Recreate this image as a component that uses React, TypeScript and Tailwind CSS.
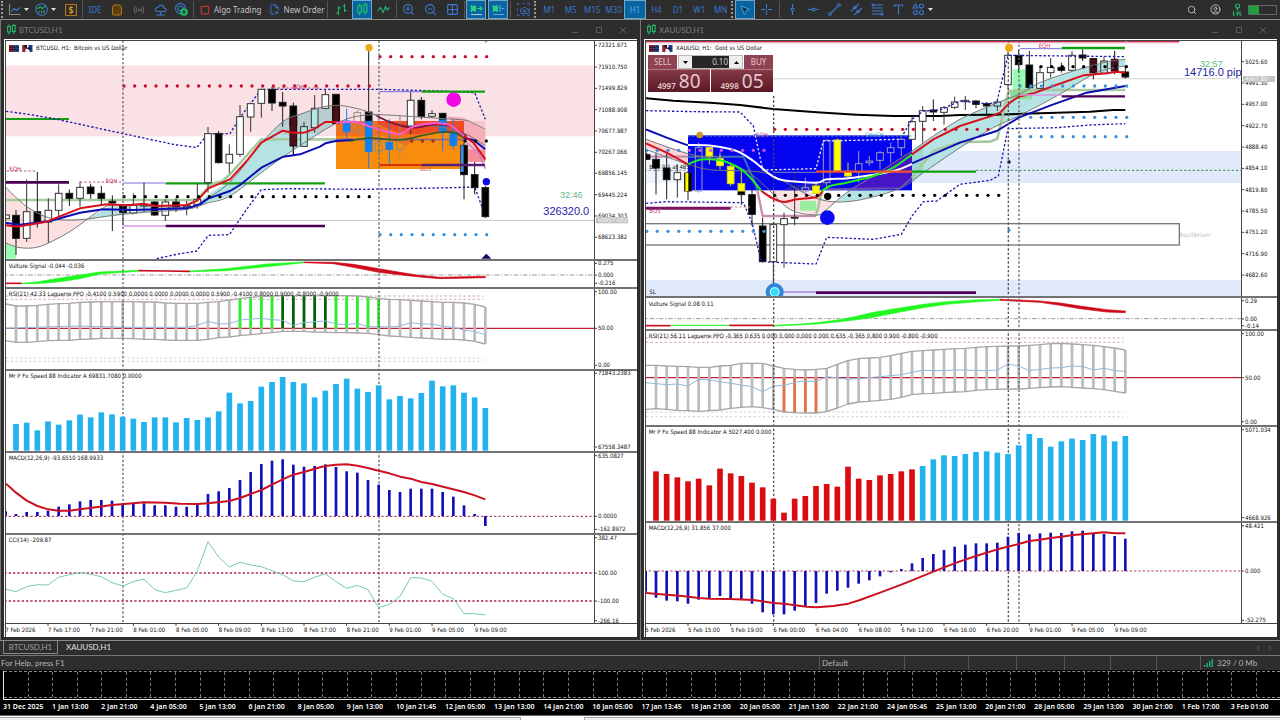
import React from "react";
import {
  Camera,
  ChevronDown,
  CircleUser,
  FilePlus2,
  Grid2x2,
  MousePointer2,
  Radio,
  Search,
  ShoppingBag,
  Square,
  ZoomIn,
  ZoomOut,
} from "lucide-react";

/*
 * Chart geometry is kept in plot units: three units to a pixel, one bar
 * every 32 units. Every panel shifts the units by its own `oy`.
 */
type Pt = [number, number];
const U = 3;
const LEFT = 6;
const BAR0 = 48;
const STEP = 32;

const pts = (list: Pt[]) => list.map((p) => p.join(",")).join(" ");

function smooth(list: Pt[]): string {
  let d = `M${list[0][0]},${list[0][1]}`;
  for (let i = 0; i < list.length - 1; i++) {
    const a = list[Math.max(0, i - 1)];
    const b = list[i];
    const c = list[i + 1];
    const e = list[Math.min(list.length - 1, i + 2)];
    d += `C${b[0] + (c[0] - a[0]) / 6},${b[1] + (c[1] - a[1]) / 6} ${c[0] - (e[0] - b[0]) / 6},${c[1] - (e[1] - b[1]) / 6} ${c[0]},${c[1]}`;
  }
  return d;
}

function Line({ p, c, w = 4, dash }: { p: Pt[]; c: string; w?: number; dash?: string }) {
  return <polyline points={pts(p)} fill="none" stroke={c} strokeWidth={w} strokeDasharray={dash} strokeLinejoin="round" />;
}
function Curve({ p, c, w = 3 }: { p: Pt[]; c: string; w?: number }) {
  return <path d={smooth(p)} fill="none" stroke={c} strokeWidth={w} />;
}
function H({ y, x1 = 0, x2 = 6000, c, w = 3, dash }: { y: number; x1?: number; x2?: number; c: string; w?: number; dash?: string }) {
  return <line x1={x1} x2={x2} y1={y} y2={y} stroke={c} strokeWidth={w} strokeDasharray={dash} />;
}
function V({ x, c = "#6a6a6a", w = 4, dash = "7 6" }: { x: number; c?: string; w?: number; dash?: string }) {
  return <line x1={x} x2={x} y1={0} y2={1200} stroke={c} strokeWidth={w} strokeDasharray={dash} />;
}
function Dots({ from, to, y, c, r = 5 }: { from: number; to: number; y: number; c: string; r?: number }) {
  const xs: number[] = [];
  for (let x = from; x <= to; x += STEP) xs.push(x);
  return (
    <g fill={c}>
      {xs.map((x) => (
        <circle key={x} cx={x} cy={y} r={r} />
      ))}
    </g>
  );
}

type Candle = [x: number, kind: string, high: number, top: number, bottom: number, low: number];
const KIND: Record<string, { fill: string; stroke: string }> = {
  w: { fill: "#ffffff", stroke: "#333333" },
  b: { fill: "#000000", stroke: "#1a1a1a" },
  m: { fill: "#4a0f18", stroke: "#1a0508" },
  l: { fill: "#1080f0", stroke: "#1080f0" },
  o: { fill: "none", stroke: "#8f8f70" },
  y: { fill: "#ffff00", stroke: "#d8d820" },
  p: { fill: "none", stroke: "#9a9ac8" },
  t: { fill: "#b5e6e6", stroke: "#333333" },
};
function Candles({ list }: { list: Candle[] }) {
  return (
    <g>
      {list.map(([x, k, h, t, b, l], i) => (
        <g key={i} stroke={KIND[k].stroke} strokeWidth={3}>
          <line x1={x} x2={x} y1={h} y2={t} />
          <line x1={x} x2={x} y1={b} y2={l} />
          <rect x={x - 10} y={t} width={20} height={Math.max(2, b - t)} fill={KIND[k].fill} />
        </g>
      ))}
    </g>
  );
}

type TextItem = { x: number; y: number; t: string; c?: string; cls?: string };
const SMALL = "font-['DejaVu_Sans_Condensed','DejaVu_Sans',sans-serif] text-[6px]";
function Texts({ items, oy }: { items: TextItem[]; oy: number }) {
  return (
    <>
      {items.map((i) => (
        <text key={i.t + i.x} x={i.x / U - LEFT} y={i.y / U + oy} fill={i.c ?? "#111"} className={i.cls ?? SMALL}>
          {i.t}
        </text>
      ))}
    </>
  );
}

type Tick = [y: number, label: string];
function Panel({
  height,
  oy,
  axis,
  axisW,
  ticks,
  texts = [],
  overlay,
  last,
  badge,
  children,
}: {
  height: string;
  oy: number;
  axis?: string;
  axisW: string;
  ticks: Tick[];
  texts?: TextItem[];
  overlay?: React.ReactNode;
  last?: boolean;
  badge?: Tick;
  children: React.ReactNode;
}) {
  return (
    <div className={`relative flex shrink-0 ${last ? "border-b border-[#444]" : "border-b-2 border-[#727272]"} ${height}`}>
      <svg className="h-full min-w-0 flex-1 overflow-hidden" aria-label={axis}>
        <g transform={`translate(${-LEFT} ${oy}) scale(${1 / U})`}>{children}</g>
        <Texts items={texts} oy={oy} />
      </svg>
      <svg className={`h-full shrink-0 overflow-visible border-l border-[#444] ${axisW}`}>
        {ticks.map(([y, t]) => (
          <g key={t}>
            <line x1={0} x2={2} y1={y / U + oy} y2={y / U + oy} stroke="#444" />
            <text x={3} y={y / U + oy + 2} fill="#111" className={SMALL}>
              {t}
            </text>
          </g>
        ))}
        {badge && (
          <g>
            <rect x={1} y={badge[0] / U + oy - 3} width={32} height={6} fill="#c4c4c4" />
            <text x={3} y={badge[0] / U + oy + 2} fill="#f4f4f4" className={SMALL}>
              {badge[1]}
            </text>
          </g>
        )}
      </svg>
      {overlay}
    </div>
  );
}

function ChartTitle({ text }: { text: string }) {
  return (
    <div className="absolute left-[3px] top-[3px] flex items-center gap-[3px] font-['DejaVu_Sans_Condensed','DejaVu_Sans',sans-serif] text-[6px] leading-[8px] text-[#111]">
      <svg className="h-[7px] w-[10px]" viewBox="0 0 10 7">
        <rect width="5" height="7" fill="#8c1c2c" />
        <rect x="5" width="5" height="7" fill="#1c4c8c" />
        <path d="M0 2.3H10M0 4.6H10" stroke="#201a30" strokeWidth="1" />
      </svg>
      <svg className="h-[7px] w-[11px]" viewBox="0 0 10 7">
        <path d="M0 0H10V7H7V4H3V7H0Z" fill="#1c3c8c" />
        <path d="M0 0H4V4H3V7H0Z" fill="#a01c24" />
        <path d="M2 0H4.500V2.500H2zM5.500 2.500H8V5H5.500z" fill="#14141c" />
        <path d="M4.500 0H6V2.500H4.500zM3 4.500H6.500V7H3z" fill="#fff" />
      </svg>
      <span className="whitespace-pre">{text}</span>
    </div>
  );
}

function Bars({ tops, base, w, color }: { tops: number[]; base: number; w: number; color: (i: number) => string }) {
  return (
    <g>
      {tops.map((t, i) => (
        <rect key={i} x={BAR0 + i * STEP - w / 2} y={Math.min(t, base)} width={w} height={Math.abs(base - t)} fill={color(i)} />
      ))}
    </g>
  );
}

function RsiBands({ up, low, color, mid }: { up: number[]; low: number[]; color: (i: number) => string | null; mid: number }) {
  const xs = up.map((_, i) => (i === 0 ? 18 : BAR0 + (i - 1) * STEP));
  return (
    <g>
      <H y={mid} c="#c0203a" w={4} />
      {xs.slice(1).map((x, i) => {
        const c = color(i);
        const orange = c === "#e0714a";
        return (
          <g key={x}>
            <rect x={x - 4} width={8} y={up[i + 1]} height={low[i + 1] - up[i + 1]} fill="#bcbaba" />
            {c && <rect x={x - 4} width={8} y={orange ? mid : up[i + 1]} height={orange ? low[i + 1] - mid : mid - up[i + 1]} fill={c} />}
          </g>
        );
      })}
      <Line p={xs.map((x, i): Pt => [x, up[i]])} c="#a6a6a6" w={4} />
      <Line p={xs.map((x, i): Pt => [x, low[i]])} c="#a6a6a6" w={4} />
    </g>
  );
}

function TimeRow({ labels }: { labels: string[] }) {
  return (
    <svg className="h-[13px] w-full overflow-visible">
      {labels.map((t, i) => {
        const x = (16 + i * 128) / U - LEFT;
        return (
          <g key={t}>
            <line x1={x} x2={x} y1={0} y2={2} stroke="#444" />
            <text x={x} y={8} fill="#111" className={SMALL}>
              {t}
            </text>
          </g>
        );
      })}
    </svg>
  );
}

/* ------------------------------ BTCUSD data ------------------------------ */

const btcCandles: Candle[] = [
  [18, "w", 535, 537, 548, 550], [48, "b", 522, 538, 607, 657], [80, "w", 430, 527, 607, 618],
  [112, "b", 408, 527, 558, 575], [145, "w", 487, 523, 558, 620], [176, "w", 445, 472, 523, 540],
  [208, "b", 460, 472, 487, 510], [240, "w", 437, 454, 487, 512], [272, "b", 443, 453, 473, 488],
  [304, "b", 450, 472, 487, 505], [337, "b", 478, 496, 501, 585], [369, "b", 505, 510, 530, 568],
  [400, "w", 472, 508, 531, 535], [432, "b", 440, 505, 510, 528], [464, "b", 495, 498, 537, 540],
  [496, "w", 490, 498, 538, 555], [528, "b", 487, 498, 512, 528], [560, "w", 495, 508, 512, 538],
  [592, "w", 443, 490, 505, 518], [624, "w", 273, 293, 440, 470], [656, "b", 285, 293, 380, 382],
  [688, "w", 325, 355, 381, 412], [720, "w", 207, 242, 355, 363], [752, "w", 200, 203, 243, 287],
  [784, "w", 158, 160, 202, 245], [816, "b", 153, 160, 201, 225], [848, "b", 168, 199, 210, 272],
  [880, "b", 200, 210, 270, 357], [880, "m", 240, 240, 330, 357], [912, "t", 258, 272, 331, 333],
  [944, "t", 177, 217, 275, 290], [976, "w", 160, 176, 217, 220], [1008, "b", 175, 175, 262, 262],
  [1008, "m", 210, 210, 262, 262], [1040, "l", 218, 255, 287, 310], [1072, "o", 222, 230, 287, 290],
  [1106, "b", 40, 228, 256, 256], [1106, "l", 256, 256, 347, 398], [1136, "o", 310, 320, 347, 350],
  [1168, "l", 250, 319, 340, 385], [1200, "o", 238, 312, 340, 360], [1232, "w", 167, 193, 270, 295],
  [1264, "b", 183, 193, 241, 250], [1296, "w", 222, 233, 241, 246], [1328, "b", 232, 232, 252, 252],
  [1328, "l", 252, 252, 290, 345], [1360, "l", 250, 290, 328, 340], [1392, "b", 320, 328, 416, 490],
  [1424, "b", 378, 416, 455, 475], [1456, "b", 450, 455, 542, 546],
];

const btcSpeed = [
  504, 500, 523, 496, 506, 493, 476, 484, 469, 475, 482, 488, 498, 484, 484, 499, 486, 492, 484, 466, 410, 442, 435, 392,
  378, 363, 378, 382, 424, 404, 384, 368, 398, 408, 388, 430, 420, 427, 411, 374, 391, 388, 410, 424, 456,
];
const btcMacd = [
  774, 768, 768, 764, 752, 745, 736, 732, 732, 734, 742, 743, 742, 748, 748, 752, 752, 745, 714, 706, 696, 672, 648, 624,
  614, 610, 626, 632, 630, 625, 633, 646, 650, 672, 686, 702, 708, 698, 698, 698, 708, 722, 748, 774, 810,
];
const btcRsiUp = [
  144, 150, 150, 148, 145, 143, 142, 139, 138, 137, 137, 137, 137, 138, 138, 141, 142, 142, 142, 139, 137, 132, 128, 124,
  122, 120, 119, 119, 119, 119, 119, 119, 119, 120, 123, 127, 130, 131, 133, 135, 137, 139, 139, 141, 145, 153,
];
const btcRsiLow = [
  254, 259, 259, 257, 254, 253, 253, 250, 249, 247, 247, 247, 248, 250, 250, 252, 253, 253, 253, 250, 245, 243, 239, 236,
  233, 230, 226, 226, 226, 228, 229, 230, 230, 231, 232, 236, 240, 242, 244, 246, 248, 250, 250, 252, 256, 264,
];

function BtcPrice() {
  return (
    <>
      <rect x={0} y={88} width={6000} height={213} fill="#fae1e5" />
      <rect x={18} y={578} width={30} height={90} fill="#98fbb4" />
      <path d="M18,455 C60,500 100,545 190,551 L262,549 C220,580 160,618 110,634 C70,640 40,632 18,622Z" fill="#fde0e0" />
      <path d="M262,549 L340,505 L440,505 L570,512 L600,495 L640,465 L700,430 L784,320 L848,255 L900,235 L960,215 L1008,210 L1008,262 L960,290 L850,362 L784,410 L690,480 L620,502 L560,520 L440,530 L340,540Z" fill="#b5e3e3" />
      <path d="M820,285 L848,255 L900,235 L960,215 L1008,208 L1008,262 L960,290 L870,300Z" fill="#b9ccd0" />
      <rect x={1392} y={255} width={64} height={123} fill="#fac6cb" />
      <rect x={1404} y={340} width={52} height={38} fill="#f78c9a" />
      <path d="M1340,240 L1392,245 L1456,285 L1456,330 L1392,300Z" fill="#f6aeb6" />
      <H y={553} c="#c8c8c8" />
      <H y={249} x1={18} x2={207} c="#12a012" w={6} />
      <Line p={[[18, 226], [80, 234], [150, 246], [180, 252], [370, 293], [440, 308], [520, 325], [590, 335], [624, 293], [690, 293], [720, 245], [784, 160], [1140, 160], [1320, 165], [1424, 170], [1456, 250]]} c="#1a1aac" w={4} dash="7 6" />
      <Line p={[[470, 668], [530, 655], [590, 645], [625, 598], [688, 596], [740, 520], [784, 461], [860, 458], [1100, 460], [1360, 455], [1424, 453], [1456, 540]]} c="#1a1aac" w={4} dash="7 6" />
      <H y={439} x1={18} x2={207} c="#4b0055" w={8} />
      <H y={570} x1={370} x2={497} c="#d49ae0" w={5} />
      <H y={570} x1={497} x2={975} c="#4b0055" w={7} />
      <H y={441} x1={370} x2={497} c="#7a6ad8" />
      <H y={442} x1={497} x2={975} c="#12a012" w={7} />
      <H y={405} x1={20} x2={110} c="#c05070" dash="7 6" />
      <H y={438} x1={240} x2={370} c="#c05070" dash="7 6" />
      <H y={156} x1={820} x2={960} c="#c05070" dash="7 6" />
      <rect x={1008} y={255} width={384} height={144} fill="#f88c0c" />
      <path d="M1008,300 L1008,255 H1392 V310 L1340,290 L1250,300 L1220,330 L1150,300 L1100,300Z" fill="#f2701c" />
      <path d="M1130,255 H1392 V305 L1330,285 L1250,295 L1200,292 L1150,272Z" fill="#ee4a24" />
      <Line p={[[18, 492], [590, 492], [620, 460], [640, 442], [665, 437], [690, 415], [784, 310], [1008, 310]]} c="#a8c9a0" w={8} />
      <Line p={[[1008, 310], [1392, 311]]} c="#8a6a80" w={5} />
      <Candles list={btcCandles} />
      <path d="M1382,328 h9 v80 h-9z" fill="#3b8fe0" />
      <Curve p={[[18, 455], [80, 512], [145, 545], [200, 552], [262, 549], [340, 538], [440, 528], [560, 520], [620, 502], [690, 480], [784, 410], [850, 362], [960, 290], [1010, 262], [1060, 243], [1120, 236], [1180, 238], [1300, 246], [1392, 252], [1420, 262], [1456, 280]]} c="#777" />
      <Curve p={[[18, 622], [60, 635], [110, 634], [160, 614], [220, 580], [290, 529], [330, 508], [400, 508], [560, 515], [600, 500], [690, 438], [784, 322], [850, 256], [900, 235], [960, 215], [1008, 208], [1060, 215], [1110, 230], [1170, 258], [1220, 273], [1300, 270], [1370, 285], [1410, 300], [1456, 330]]} c="#777" />
      <Line p={[[18, 561], [60, 566], [150, 555], [240, 530], [310, 520], [400, 522], [560, 517], [600, 505], [624, 488], [690, 465], [720, 447], [784, 395], [850, 362], [900, 355], [960, 332], [976, 322], [1008, 315], [1060, 312]]} c="#0c0cb4" w={6} />
      <Curve p={[[1050, 315], [1110, 306], [1200, 312], [1260, 300], [1328, 288], [1370, 292], [1400, 312]]} c="#2f5a20" w={5} />
      <Curve p={[[1130, 240], [1180, 262], [1240, 275], [1300, 266], [1350, 270], [1400, 300]]} c="#7c1040" w={5} />
      <Line p={[[1392, 306], [1420, 312], [1456, 340]]} c="#0c0cb4" w={6} />
      <Line p={[[18, 568], [50, 572], [140, 557], [240, 517], [320, 505], [380, 508], [430, 503], [470, 510], [560, 507], [592, 494], [625, 457], [690, 430], [740, 375], [784, 320], [848, 284], [880, 290], [912, 290], [940, 280], [976, 258], [1010, 258]]} c="#d8101c" w={6} />
      <Curve p={[[1008, 260], [1070, 258], [1110, 272], [1168, 288], [1200, 295], [1240, 272], [1300, 262], [1350, 268], [1395, 302]]} c="#ff58d0" w={6} />
      <Line p={[[1392, 300], [1420, 320], [1456, 370]]} c="#d8101c" w={6} />
      <Line p={[[1392, 312], [1436, 352], [1456, 398]]} c="#c58ac0" w={5} />
      <H y={167} x1={1138} x2={1265} c="#7a6ad8" />
      <H y={167} x1={1265} x2={1455} c="#12a012" w={7} />
      <H y={387} x1={1138} x2={1265} c="#d01010" w={4} />
      <H y={387} x1={1265} x2={1455} c="#5a2070" w={7} />
      <Dots from={372} to={1108} y={150} c="#cc1028" />
      <Dots from={1140} to={1460} y={62} c="#cc1028" />
      <Dots from={372} to={1108} y={482} c="#000" />
      <Dots from={1140} to={1460} y={596} c="#3a90dc" />
      <Dots from={1235} to={1330} y={315} c="#9c3010" />
      <Dots from={1395} to={1460} y={315} c="#111" />
      <V x={369} />
      <V x={1137} />
      <circle cx={1107} cy={35} r={11} fill="#f4a818" />
      <circle cx={1361} cy={191} r={22} fill="#ee08e4" />
      <circle cx={1459} cy={437} r={11} fill="#0a0ae0" />
      <path d="M1444,668 L1459,653 L1474,668Z" fill="#0a0a60" />
      <path d="M1450,12 H1466 L1458,21Z" fill="#999" />
    </>
  );
}

/* ------------------------------ XAUUSD data ------------------------------ */

const xauCandles: Candle[] = [
  [20, "b", 350, 356, 370, 372], [48, "b", 350, 370, 396, 475], [80, "b", 350, 396, 431, 490], [112, "w", 385, 410, 431, 485],
  [144, "b", 405, 411, 465, 493], [176, "p", 320, 335, 465, 470], [208, "y", 333, 335, 360, 385], [240, "y", 350, 368, 389, 400],
  [272, "y", 380, 391, 443, 450], [304, "b", 465, 465, 476, 507], [304, "y", 400, 443, 465, 465], [336, "b", 460, 476, 535, 570],
  [368, "b", 545, 570, 677, 680], [400, "w", 563, 566, 677, 770], [432, "w", 530, 548, 566, 695], [464, "w", 410, 544, 547, 568],
  [496, "p", 425, 455, 465, 490], [528, "y", 436, 450, 472, 475], [560, "p", 310, 313, 440, 465], [592, "y", 308, 312, 404, 406],
  [624, "y", 380, 406, 420, 430], [656, "p", 345, 383, 408, 440], [688, "p", 360, 375, 380, 390], [720, "p", 345, 350, 373, 400],
  [752, "p", 320, 335, 350, 380], [784, "p", 300, 310, 335, 360], [816, "w", 240, 257, 310, 312], [848, "w", 210, 224, 256, 320],
  [880, "b", 190, 222, 228, 255], [912, "w", 210, 215, 229, 266], [944, "w", 182, 198, 214, 220], [976, "w", 180, 193, 197, 222],
  [1008, "b", 193, 195, 205, 217], [1040, "b", 198, 203, 210, 235], [1072, "t", 190, 198, 210, 225], [1104, "w", 38, 58, 146, 160],
  [1136, "b", 40, 58, 86, 110], [1168, "b", 45, 87, 155, 160], [1200, "w", 90, 110, 157, 160], [1232, "w", 66, 94, 110, 125],
  [1264, "b", 80, 94, 103, 110], [1296, "w", 45, 58, 103, 105], [1328, "b", 40, 57, 66, 75], [1360, "m", 66, 68, 110, 130],
  [1392, "t", 62, 75, 112, 115], [1424, "m", 45, 70, 105, 115], [1456, "b", 90, 108, 123, 128],
];
const xauSpeed = [
  544, 552, 562, 574, 566, 586, 536, 550, 558, 578, 592, 626, 668, 626, 618, 588, 582, 590, 530, 566, 570, 556, 552, 544,
  538, 528, 508, 496, 498, 492, 486, 484, 488, 492, 466, 432, 444, 470, 454, 446, 450, 432, 436, 454, 438,
];
const xauMacd = [
  923, 932, 934, 941, 929, 924, 918, 924, 927, 941, 967, 973, 973, 962, 949, 939, 911, 902, 893, 881, 871, 859, 847, 837,
  820, 804, 792, 780, 770, 764, 760, 760, 758, 740, 729, 733, 730, 728, 729, 724, 722, 730, 732, 738, 746,
];
const xauRsiUp = [
  226, 226, 228, 229, 230, 232, 232, 228, 226, 220, 220, 220, 228, 235, 238, 240, 238, 235, 223, 212, 206, 204, 202, 197,
  190, 184, 182, 180, 178, 176, 175, 172, 170, 169, 168, 168, 166, 164, 161, 160, 162, 164, 166, 170, 174, 180,
];
const xauRsiLow = [
  358, 356, 358, 361, 362, 364, 362, 360, 355, 352, 350, 353, 358, 366, 368, 369, 369, 365, 354, 342, 336, 334, 331, 328,
  322, 314, 311, 310, 308, 306, 305, 301, 299, 298, 297, 297, 295, 293, 291, 290, 292, 294, 296, 299, 304, 309,
];

const xauA: Pt[] = [[18, 310], [140, 352], [240, 372], [320, 405], [380, 455], [450, 520], [530, 537], [560, 520], [620, 470], [700, 420], [784, 365], [816, 345], [880, 300], [960, 250], [1060, 205], [1136, 175], [1200, 140], [1300, 105], [1400, 78], [1456, 70]];
const xauB: Pt[] = [[18, 340], [100, 370], [160, 390], [220, 402], [360, 408], [430, 435], [500, 475], [560, 495], [620, 497], [690, 485], [784, 455], [850, 410], [960, 335], [1060, 275], [1136, 240], [1250, 180], [1350, 120], [1400, 100], [1456, 90]];

function XauPrice() {
  return (
    <>
      <rect x={0} y={345} width={6000} height={96} fill="#e0eafa" />
      <rect x={0} y={345} width={144} height={96} fill="#eef3fc" />
      <rect x={0} y={732} width={6000} height={48} fill="#e0eafa" />
      <H y={17} x1={0} x2={1618} c="#c02c50" w={5} />
      <H y={21} x1={0} x2={1618} c="#f3c3cf" w={3} />
      <H y={128} x1={400} c="#dcdcdc" w={4} />
      <H y={403} x1={0} x2={144} c="#555" dash="7 6" w={2} />
      <H y={403} x1={1008} c="#3a8a50" dash="7 6" w={3} />
      <path d="M18,310 L144,352 L144,385 L18,335Z" fill="#fbd3d8" />
      <path d="M385,463 L450,520 L530,537 L560,520 L585,497 L560,495 L500,463Z" fill="#fde0e0" />
      <path d={`M${pts([[590, 497], [620, 470], ...xauA.slice(9), ...xauB.slice(8).reverse()])}Z`} fill="#b5e3e3" />
      <rect x={480} y={495} width={48} height={29} fill="#98ee9c" />
      <rect x={1118} y={100} width={42} height={72} fill="#98fbb4" />
      <rect x={1110} y={164} width={66} height={26} fill="#8cdf9c" />
      <rect x={144} y={298} width={672} height={165} fill="#0404f0" />
      <path d="M430,463 L530,463 L600,420 L540,440 L450,450Z" fill="#2020c0" />
      <path d="M620,463 L720,405 L816,345 L816,432 L784,455 L700,463Z" fill="#4416c8" />
      <path d="M816,345 L816,440 L850,410 L850,322Z" fill="#7fc9c9" opacity={0.5} />
      <rect x={-30} y={563} width={1648} height={64} fill="none" stroke="#777" strokeWidth={4} />
      <Line p={[[18, 187], [100, 194], [210, 200], [300, 207], [400, 219], [530, 229], [650, 236], [760, 240], [900, 240], [960, 237], [1060, 236], [1200, 232], [1350, 227], [1420, 222], [1456, 222]]} c="#000" w={6} />
      <Line p={[[18, 362], [144, 362]]} c="#c890b0" w={7} />
      <Line p={[[144, 362], [310, 362], [345, 440], [352, 463]]} c="#3c6cb4" w={6} />
      <Line p={[[352, 463], [368, 540], [528, 540]]} c="#c890b0" w={7} />
      <Line p={[[528, 540], [540, 490], [548, 463]]} c="#a8c9a0" w={8} />
      <Line p={[[560, 460], [780, 457], [816, 425]]} c="#6a4cb8" w={6} />
      <Line p={[[816, 425], [880, 345], [960, 318], [1050, 317], [1072, 308], [1098, 195], [1106, 166], [1140, 162], [1456, 162]]} c="#a8c9a0" w={8} />
      <Candles list={xauCandles} />
      <path d="M136,411 h9 v54 h-9z" fill="#ffff00" />
      <Curve p={xauA} c="#777" />
      <Curve p={xauB} c="#777" />
      <Line p={[[18, 224], [160, 227], [300, 228], [340, 270], [346, 298]]} c="#1a1aac" w={4} dash="7 6" />
      <Line p={[[346, 298], [368, 402], [528, 398], [550, 315], [780, 310]]} c="#e8e8ff" w={4} dash="7 6" />
      <Line p={[[784, 305], [816, 250], [850, 225], [900, 222], [960, 195], [1040, 203], [1070, 200], [1104, 58], [1456, 62]]} c="#1a1aac" w={4} dash="7 6" />
      <Line p={[[18, 502], [80, 497], [310, 500], [336, 560], [362, 670], [380, 678], [528, 684], [560, 604], [700, 610], [784, 595], [816, 540], [850, 497], [890, 495], [960, 445], [1050, 433], [1075, 420], [1104, 278], [1250, 275], [1350, 267], [1456, 263]]} c="#1a1aac" w={4} dash="7 6" />
      <Line p={[[18, 280], [80, 305], [144, 328]]} c="#0c0cb4" w={6} />
      <Curve p={[[144, 327], [220, 330], [290, 345], [340, 375], [390, 415], [430, 433], [530, 440], [560, 430], [640, 425], [760, 405], [816, 384]]} c="#fff" w={6} />
      <Line p={[[816, 382], [960, 320], [1070, 285], [1136, 245], [1240, 205], [1340, 170], [1456, 150]]} c="#0c0cb4" w={6} />
      <Line p={[[18, 322], [80, 350], [144, 385]]} c="#d8101c" w={6} />
      <Curve p={[[144, 385], [176, 372], [210, 370], [260, 378], [310, 405], [340, 435], [364, 465]]} c="#20f020" w={6} />
      <Curve p={[[364, 465], [400, 488], [432, 498], [470, 490], [530, 483], [548, 465]]} c="#d8101c" w={6} />
      <Curve p={[[546, 465], [570, 450], [620, 440], [700, 420], [760, 395], [816, 355]]} c="#20f020" w={6} />
      <Line p={[[816, 355], [880, 310], [960, 270], [1060, 238], [1080, 230], [1110, 200], [1136, 182], [1180, 172], [1240, 150], [1330, 118], [1400, 112], [1430, 107], [1456, 110]]} c="#d8101c" w={6} />
      <H y={407} x1={528} x2={816} c="#f0502c" w={7} />
      <H y={407} x1={816} x2={1008} c="#12a012" w={7} />
      <H y={36} x1={1265} x2={1455} c="#12a012" w={7} />
      <H y={38} x1={1140} x2={1265} c="#7a6ad8" />
      <H y={517} x1={18} x2={272} c="#7a1060" w={9} />
      <H y={513} x1={272} x2={330} c="#c08090" dash="7 6" />
      <H y={768} x1={404} x2={528} c="#b080e0" w={4} />
      <H y={770} x1={528} x2={1008} c="#4b0055" w={8} />
      <H y={177} x1={1140} x2={1265} c="#d49ae0" w={4} />
      <H y={181} x1={1265} x2={1455} c="#4b0055" w={7} />
      <H y={300} x1={144} x2={816} c="#60a0b0" dash="7 6" w={3} />
      <H y={409} x1={400} x2={528} c="#8080c0" w={3} />
      <Dots from={404} to={1044} y={280} c="#cc1028" />
      <Dots from={404} to={1076} y={478} c="#000" />
      <Dots from={20} to={120} y={343} c="#3a90dc" />
      <Dots from={148} to={373} y={343} c="#c858dc" />
      <Dots from={20} to={373} y={586} c="#3a90dc" />
      <Dots from={1140} to={1460} y={150} c="#3a90dc" />
      <Dots from={1172} to={1460} y={244} c="#3a90dc" />
      <Dots from={1140} to={1460} y={302} c="#3a90dc" />
      <Dots from={1203} to={1460} y={92} c="#000" />
      <circle cx={1107} cy={378} r={5} fill="#000" />
      <circle cx={1107} cy={582} r={5} fill="#3a90dc" />
      <line x1={401} x2={401} y1={180} y2={800} stroke="#444" strokeWidth={4} strokeDasharray="7 6" />
      <V x={1105} c="#555" />
      <V x={1137} />
      <circle cx={179} cy={297} r={10} fill="#d09820" />
      <circle cx={1107} cy={35} r={12} fill="#f4a818" />
      <circle cx={562} cy={545} r={22} fill="#0a0af0" />
      <circle cx={563} cy={481} r={11} fill="#000" />
      <circle cx={404} cy={768} r={21} fill="#b8f4fc" stroke="#2f86dc" strokeWidth={12} />
      <circle cx={404} cy={768} r={11} fill="#30dcf4" />
      <path d="M1450,12 H1466 L1458,21Z" fill="#999" />
    </>
  );
}

function TradePanel() {
  return (
    <form className="absolute left-[2px] top-[14px] w-[125px] text-[#e6c8cc]" onSubmit={(e) => e.preventDefault()}>
      <div className="flex h-[14px]">
        <button type="button" className="w-[29px] bg-[#8f4352] text-[8px] leading-[14px]">SELL</button>
        <div className="mx-[1px] flex flex-1 gap-px border border-[#bbb] bg-[#eee]">
          <button type="button" aria-label="Decrease volume" className="flex w-[12px] items-center justify-center">
            <svg className="h-[3px] w-[5px]" viewBox="0 0 5 3"><path d="M0 0H5L2.500 3Z" fill="#000" /></svg>
          </button>
          <input aria-label="Volume" defaultValue="0.10" className="w-0 min-w-0 flex-1 bg-[#262626] px-[1px] text-right text-[8px] leading-[10px] text-[#ccc]" />
          <button type="button" aria-label="Increase volume" className="flex w-[12px] items-center justify-center">
            <svg className="h-[3px] w-[5px]" viewBox="0 0 5 3"><path d="M0 3H5L2.500 0Z" fill="#000" /></svg>
          </button>
        </div>
        <button type="button" className="w-[29px] bg-[#8f4352] text-[8px] leading-[14px]">BUY</button>
      </div>
      <div className="flex gap-[1px]">
        {[["4997", "80"], ["4998", "05"]].map(([a, b]) => (
          <button key={a} type="button" className="flex h-[23px] flex-1 items-end justify-center gap-[3px] border-t border-[#b07882] bg-gradient-to-b from-[#853a48] to-[#5a1826] pb-[1px]">
            <span className="text-[8px] font-semibold leading-[11px]">{a}</span>
            <span className="text-[19px] leading-[19px]">{b}</span>
          </button>
        ))}
      </div>
    </form>
  );
}

/* -------------------------------- windows -------------------------------- */

function CandleGlyph({ cls = "h-[11px] w-[9px]" }: { cls?: string }) {
  return (
    <svg className={cls} viewBox="0 0 9 11" fill="none" stroke="#1fb866" strokeWidth="1.100">
      <path d="M2 .5V2.500M2 8V10.500M6.800 0V1.500M6.800 7.500V10" />
      <rect x=".6" y="2.500" width="2.800" height="5.500" />
      <rect x="5.400" y="1.500" width="2.800" height="6" />
    </svg>
  );
}

function ChartWindow({ name, children }: { name: string; children: React.ReactNode }) {
  return (
    <section className="flex min-w-0 flex-1 flex-col border-l border-[#777] bg-[#2d2d2d] pb-[3px] pl-[3px] pr-[3px]">
      <header className="flex h-[19px] items-center pl-[3px] pr-[9px] text-[8px] text-[#7c7c7c]">
        <CandleGlyph />
        <span className="ml-[3px] font-['Lato','Noto_Sans',sans-serif]">{name}</span>
        <div className="ml-auto flex gap-[14px] text-[#5a5a5a]">
          <button type="button" aria-label="Minimize" className="flex size-[10px] items-center justify-center"><svg className="size-[6px]" viewBox="0 0 6 6" stroke="currentColor"><path d="M0 5.500H6" /></svg></button>
          <button type="button" aria-label="Maximize" className="flex size-[10px] items-center justify-center"><svg className="size-[6px]" viewBox="0 0 6 6" stroke="currentColor" fill="none"><path d="M.5 .5H5.500V5.500H.5Z" /></svg></button>
          <button type="button" aria-label="Close" className="flex size-[10px] items-center justify-center"><svg className="size-[6px]" viewBox="0 0 6 6" stroke="currentColor"><path d="M0 0L6 6M6 0L0 6" /></svg></button>
        </div>
      </header>
      <div className="flex-1 bg-white pl-[1px] pt-[1px]">
        <div className="border-l border-t border-[#444]">{children}</div>
      </div>
    </section>
  );
}

function BtcWindow() {
  const ax = "w-[43px]";
  return (
    <ChartWindow name="BTCUSD,H1">
      <Panel
        height="h-[220px]" oy={-5} axisW={ax} axis="BTCUSD price"
        ticks={[[28, "72321.671"], [93, "71910.750"], [157, "71499.829"], [221, "71088.908"], [285, "70677.987"], [349, "70267.066"], [412, "69856.145"], [476, "69445.224"], [540, "69034.303"], [604, "68623.382"]]}
        badge={[553, "68957.002"]}
        texts={[
          { x: 28, y: 406, t: "EQH", c: "#c0305a" },
          { x: 317, y: 440, t: "EQH", c: "#c0305a" },
          { x: 878, y: 159, t: "EQH", c: "#c0305a" },
          { x: 1260, y: 406, t: "BOS", c: "#e05060" },
          { x: 1680, y: 485, t: "32:46", c: "#5fba88", cls: "font-['Liberation_Sans',sans-serif] text-[9px]" },
          { x: 1630, y: 538, t: "326320.0", c: "#1c1ca8", cls: "font-['Liberation_Sans',sans-serif] text-[11px]" },
        ]}
        overlay={<ChartTitle text="BTCUSD, H1:  Bitcoin vs US Dollar" />}
      >
        <BtcPrice />
      </Panel>
      <Panel height="h-[28px]" oy={-5} axisW={ax} ticks={[[22, "0.275"], [57, "0.000"], [82, "-0.216"]]} texts={[{ x: 26, y: 37, t: "Vulture Signal -0.044 -0.036" }]}>
        <H y={57} c="#999" w={3} dash="14 5 4 5" />
        <H y={82} x1={18} x2={65} c="#d01020" w={5} />
        <path d="M65,82 L110,78 L180,66 L240,57 L300,48 L415,43 L415,46 L300,54 L240,68 L180,77 L110,83 L65,83Z" fill="#20f820" stroke="#20f820" strokeWidth={2} />
        <Line p={[[415, 44], [500, 45], [570, 46]]} c="#c81020" w={5} />
        <path d="M570,45 L680,38 L800,24 L912,18 L912,20 L800,32 L680,44 L570,47Z" fill="#20f820" stroke="#20f820" strokeWidth={2} />
        <path d="M912,18 L1000,19 L1060,25 L1136,38 L1200,49 L1250,57 L1320,64 L1400,62 L1456,61 L1456,65 L1320,68 L1250,62 L1136,49 L1060,34 L1000,23 L912,20Z" fill="#d00818" stroke="#d00818" strokeWidth={2} />
        <V x={369} /><V x={1137} />
      </Panel>
      <Panel height="h-[82px]" oy={-33} axisW={ax} ticks={[[107, "100.00"], [217, "50.00"], [328, "0.00"]]} texts={[{ x: 26, y: 121, t: "RSI(21) 42.33 Laguerre PPO -0.4100 0.5900 0.0000 0.0000 0.0000 0.0000 0.5900 -0.4100 0.8000 0.9000 -0.8000 -0.9000" }]}>
        <H y={120} x1={18} x2={1450} c="#d0a8b0" dash="7 7" />
        <H y={130} x1={18} x2={1450} c="#d0a8b0" dash="7 7" />
        <H y={306} x1={18} x2={1450} c="#ccd4d4" dash="7 7" />
        <H y={316} x1={18} x2={1450} c="#ccd4d4" dash="7 7" />
        <RsiBands up={btcRsiUp} low={btcRsiLow} mid={217} color={(i) => (i >= 21 && i <= 34 ? (i >= 25 && i <= 29 ? "#056005" : "#20f820") : null)} />
        <Line p={[[18, 217], [160, 212], [240, 210], [370, 214], [560, 214], [592, 208], [624, 196], [656, 204], [688, 203], [720, 192], [784, 187], [816, 191], [848, 193], [880, 208], [912, 200], [960, 196], [976, 195], [1008, 204], [1040, 206], [1072, 202], [1104, 212], [1136, 212], [1168, 213], [1200, 210], [1232, 200], [1264, 204], [1296, 204], [1328, 211], [1360, 214], [1392, 222], [1424, 227], [1456, 236]]} c="#8fb8dc" w={3} />
        <V x={369} /><V x={1137} />
      </Panel>
      <Panel height="h-[82px]" oy={-115} axisW={ax} ticks={[[352, "71843.2383"], [573, "67558.3487"]]} texts={[{ x: 26, y: 367, t: "Mr P Fx Speed 88 Indicator A 69831.7080 0.0000" }]}>
        <V x={369} /><V x={1137} />
        <Bars tops={btcSpeed} base={584} w={17} color={() => "#22b2ee"} />
      </Panel>
      <Panel height="h-[82px]" oy={-197} axisW={ax} ticks={[[599, "635.0827"], [781, "0.0000"], [820, "-162.8972"]]} texts={[{ x: 26, y: 613, t: "MACD(12,26,9) -93.6510 168.9933" }]}>
        <V x={369} /><V x={1137} />
        <H y={781} c="#902040" dash="7 6" />
        <rect x={18} y={766} width={3} height={14} fill="#1010b4" />
        <Bars tops={btcMacd} base={780} w={8} color={() => "#1010b4"} />
        <Line p={[[18, 683], [48, 710], [80, 734], [112, 750], [144, 760], [176, 764], [208, 764], [240, 760], [300, 752], [336, 747], [400, 742], [432, 739], [496, 740], [540, 743], [592, 744], [624, 742], [688, 735], [720, 726], [752, 714], [784, 702], [816, 686], [848, 670], [880, 656], [912, 648], [960, 634], [976, 630], [1008, 626], [1040, 625], [1072, 629], [1104, 636], [1136, 644], [1168, 652], [1200, 662], [1232, 668], [1264, 678], [1296, 684], [1344, 696], [1392, 708], [1424, 718], [1456, 730]]} c="#cc1020" w={6} />
      </Panel>
      <Panel last height="h-[89px]" oy={-279} axisW={ax} ticks={[[845, "382.47"], [951, "100.00"], [1035, "-100.00"], [1094, "-266.16"]]} texts={[{ x: 26, y: 859, t: "CCI(14) -209.87" }]}>
        <V x={369} /><V x={1137} />
        <H y={951} c="#b02848" w={4} dash="7 6" />
        <H y={1035} c="#b02848" w={4} dash="7 6" />
        <Line p={[[18, 1000], [48, 1007], [80, 992], [112, 986], [144, 987], [176, 964], [208, 956], [240, 950], [272, 955], [304, 962], [336, 980], [368, 990], [400, 977], [432, 969], [464, 1001], [496, 1010], [528, 1003], [560, 996], [592, 945], [624, 857], [656, 903], [688, 933], [720, 919], [752, 927], [784, 932], [816, 944], [848, 956], [880, 975], [912, 977], [944, 964], [976, 953], [1008, 977], [1040, 997], [1072, 988], [1104, 1001], [1136, 1055], [1168, 1045], [1200, 1021], [1232, 965], [1264, 966], [1296, 976], [1328, 1015], [1360, 1028], [1392, 1073], [1424, 1073], [1456, 1077]]} c="#78ccb0" w={3} />
      </Panel>
      <TimeRow labels={["7 Feb 2026", "7 Feb 17:00", "7 Feb 21:00", "8 Feb 01:00", "8 Feb 05:00", "8 Feb 09:00", "8 Feb 13:00", "8 Feb 17:00", "8 Feb 21:00", "9 Feb 01:00", "9 Feb 05:00", "9 Feb 09:00"]} />
    </ChartWindow>
  );
}

function XauWindow() {
  const ax = "w-[36px]";
  const lines = (
    <>
      <V x={401} c="#555" /><V x={1105} c="#555" /><V x={1137} />
    </>
  );
  return (
    <ChartWindow name="XAUUSD,H1">
      <Panel
        height="h-[257px]" oy={-5} axisW={ax} axis="XAUUSD price"
        ticks={[[77, "5025.60"], [141, "4991.30"], [205, "4957.00"], [269, "4922.70"], [333, "4888.40"], [397, "4854.10"], [461, "4819.80"], [525, "4785.50"], [589, "4751.20"], [653, "4716.90"], [717, "4682.60"]]}
        badge={[129, "4997.80"]}
        texts={[
          { x: 28, y: 398, t: "BUY 0.1 at 4850" },
          { x: 348, y: 302, t: "EQH", c: "#b04080" },
          { x: 674, y: 302, t: "CHoCH", c: "#3aa0c0" },
          { x: 28, y: 530, t: "BOS", c: "#c03a70" },
          { x: 28, y: 775, t: "SL" },
          { x: 1196, y: 36, t: "EQH", c: "#e04060" },
          { x: 1619, y: 602, t: "Equilibrium", c: "#bdbdbd" },
          { x: 1680, y: 94, t: "32:57", c: "#5fba88", cls: "font-['Liberation_Sans',sans-serif] text-[9px]" },
          { x: 1632, y: 121, t: "14716.0 pip", c: "#1c1ca8", cls: "font-['Liberation_Sans',sans-serif] text-[11px]" },
        ]}
        overlay={<><ChartTitle text="XAUUSD, H1:  Gold vs US Dollar" /><TradePanel /></>}
      >
        <XauPrice />
      </Panel>
      <Panel height="h-[33px]" oy={-8} axisW={ax} ticks={[[32, "0.29"], [87, "0.00"], [107, "-0.14"]]} texts={[{ x: 26, y: 47, t: "Vulture Signal 0.08 0.11" }]}>
        <H y={86} c="#999" w={3} dash="14 5 4 5" />
        <H y={107} x1={18} x2={92} c="#c81020" w={5} />
        <H y={106} x1={92} x2={268} c="#40f040" w={4} />
        <H y={106} x1={268} x2={402} c="#c81020" w={5} />
        <path d="M402,106 L480,102 L530,98 L600,89 L650,79 L700,67 L780,54 L850,43 L920,35 L1000,30 L1080,28 L1080,31 L1000,36 L920,43 L850,53 L780,66 L700,82 L650,89 L600,95 L530,102 L402,108Z" fill="#20f820" stroke="#20f820" strokeWidth={2} />
        <path d="M1080,28 L1136,30 L1200,33 L1260,39 L1320,48 L1400,59 L1456,63 L1456,68 L1400,66 L1320,56 L1260,46 L1200,37 L1080,31Z" fill="#d00818" stroke="#d00818" strokeWidth={2} />
        {lines}
      </Panel>
      <Panel height="h-[96px]" oy={-41} axisW={ax} ticks={[[131, "100.00"], [263, "50.00"], [395, "0.00"]]} texts={[{ x: 26, y: 145, t: "RSI(21) 56.11 Laguerre PPO -0.365 0.635 0.000 0.000 0.000 0.000 0.635 -0.365 0.800 0.900 -0.800 -0.900" }]}>
        <H y={144} x1={18} x2={1450} c="#d0a8b0" dash="7 7" />
        <H y={157} x1={18} x2={1450} c="#d0a8b0" dash="7 7" />
        <H y={366} x1={18} x2={1450} c="#ccd4d4" dash="7 7" />
        <H y={380} x1={18} x2={1450} c="#ccd4d4" dash="7 7" />
        <RsiBands up={xauRsiUp} low={xauRsiLow} mid={263} color={(i) => (i >= 12 && i <= 15 ? "#e0714a" : null)} />
        <Line p={[[18, 278], [80, 284], [112, 282], [144, 288], [176, 268], [208, 270], [272, 280], [336, 290], [368, 305], [400, 288], [432, 286], [480, 274], [528, 274], [560, 260], [624, 268], [700, 262], [784, 254], [820, 246], [848, 241], [900, 242], [960, 240], [1040, 242], [1072, 240], [1104, 222], [1136, 228], [1168, 242], [1232, 234], [1264, 233], [1296, 228], [1330, 230], [1360, 240], [1392, 235], [1424, 242], [1456, 244]]} c="#8fb8dc" w={3} />
        {lines}
      </Panel>
      <Panel height="h-[96px]" oy={-137} axisW={ax} ticks={[[419, "5071.034"], [683, "4668.926"]]} texts={[{ x: 26, y: 433, t: "Mr P Fx Speed 88 Indicator A 5027.400 0.000" }]}>
        {lines}
        <Bars tops={xauSpeed} base={692} w={17} color={(i) => (i <= 24 ? "#dc0c14" : "#22b2ee")} />
      </Panel>
      <Panel last height="h-[101px]" oy={-233} axisW={ax} ticks={[[707, "48.421"], [843, "0.000"], [991, "-52.275"]]} texts={[{ x: 26, y: 721, t: "MACD(12,26,9) 31.856 37.000" }]}>
        {lines}
        <H y={843} c="#b04050" dash="7 6" />
        <rect x={18} y={843} width={3} height={62} fill="#1010b4" />
        <Bars tops={xauMacd} base={843} w={8} color={() => "#1010b4"} />
        <Line p={[[18, 909], [80, 914], [128, 918], [176, 924], [210, 926], [270, 927], [340, 930], [400, 939], [432, 941], [500, 950], [530, 952], [580, 948], [625, 941], [660, 930], [720, 908], [784, 884], [816, 871], [880, 845], [912, 832], [960, 814], [1008, 798], [1072, 778], [1136, 762], [1168, 753], [1200, 749], [1232, 744], [1264, 740], [1300, 735], [1344, 731], [1392, 727], [1424, 730], [1456, 730]]} c="#cc1020" w={6} />
      </Panel>
      <TimeRow labels={["5 Feb 2026", "5 Feb 15:00", "5 Feb 19:00", "6 Feb 00:00", "6 Feb 04:00", "6 Feb 08:00", "6 Feb 12:00", "6 Feb 16:00", "6 Feb 20:00", "9 Feb 01:00", "9 Feb 05:00", "9 Feb 09:00"]} />
    </ChartWindow>
  );
}

/* -------------------------------- toolbar -------------------------------- */

const Sep = ({ cls = "" }: { cls?: string }) => <span className={`h-[17px] w-px shrink-0 bg-[#555] ${cls}`} />;
const DotSep = () => <span className="h-[17px] w-0 shrink-0 border-l-2 border-dotted border-[#999]" />;

function Tool({ label, w = "w-[21px]", active, children }: { label: string; w?: string; active?: boolean; children: React.ReactNode }) {
  return (
    <button
      type="button"
      aria-label={label}
      className={`flex h-[19px] shrink-0 items-center justify-center gap-[3px] ${w} ${active ? "border border-[#6aa8d0] bg-[#0a64a0]" : ""}`}
    >
      {children}
    </button>
  );
}
function Glyph({ d, c = "#3b78d0", w = 1.1, children }: { d?: string; c?: string; w?: number; children?: React.ReactNode }) {
  return (
    <svg className="size-[13px] shrink-0" viewBox="0 0 13 13" fill="none" stroke={c} strokeWidth={w}>
      {d && <path d={d} />}
      {children}
    </svg>
  );
}
const Caret = () => (
  <svg className="h-[3px] w-[5px]" viewBox="0 0 5 3"><path d="M0 0H5L2.500 3Z" fill="#ddd" /></svg>
);

function Toolbar() {
  return (
    <nav className="flex h-[19px] shrink-0 items-center text-[8px] text-[#c4c4c4]">
      <span className="w-[1px]" />
      <DotSep />
      <span className="w-[3px]" />
      <Tool label="Chart type" w="w-[25px]"><Glyph c="#8a8a8a" d="M1.500 1V11.500H12.500"><path d="M3 9L6 5.500L8.500 7.500L12 4.500" stroke="#3b78d0" /></Glyph><Caret /></Tool>
      <Tool label="Indicators" w="w-[29px]"><Glyph><circle cx="6.500" cy="6.500" r="5.800" /><path d="M2.500 6L5 4L7.500 5.500L10.500 3" stroke="#1fb866" /><path d="M4 10V8M6.500 10V7.500M9 10V7" stroke="#1fb866" /></Glyph><Caret /></Tool>
      <Tool label="Trade"><svg className="size-[12px]" viewBox="0 0 12 12"><rect x=".5" y=".5" width="11" height="11" rx="1" fill="none" stroke="#b87818" strokeWidth="1.200" /><path d="M8 3.800C7 2.800 4.200 3 4.200 4.600C4.200 6.200 8 5.600 8 7.500C8 9 5 9.200 4 8.200M6 2V10" fill="none" stroke="#d8921c" strokeWidth="1.100" /></svg></Tool>
      <Sep cls="mx-[1px]" />
      <button type="button" className="h-[19px] w-[22px] shrink-0 text-[8px] text-[#3b78d0]">IDE</button>
      <Tool label="Market" w="w-[22px]"><ShoppingBag size={12} color="#b87818" fill="#5c4010" /></Tool>
      <Tool label="Signals"><Radio size={12} color="#6a6a6a" /></Tool>
      <Tool label="Virtual hosting" w="w-[22px]"><Glyph d="M3.500 8.500H10C12.800 8.500 12.800 5.200 10.200 5C9.500 1.500 4.800 1.300 4 4.500C.3 4.500.3 8.500 3.500 8.500M6.500 8.500V12M2 12H11" /></Tool>
      <Tool label="Community"><Glyph><circle cx="5.500" cy="5.500" r="5" /><circle cx="5.500" cy="5.500" r="2.500" /><circle cx="9" cy="9" r="3.300" fill="#1fb866" stroke="#1fb866" /><path d="M9 7V11M7 9H11" stroke="#1d3d2a" /></Glyph></Tool>
      <Sep cls="ml-[1px]" />
      <button type="button" className="ml-[6px] flex shrink-0 items-center gap-[4px]"><Square size={10} color="#c03030" strokeWidth={3} />Algo Trading</button>
      <button type="button" className="ml-[7px] flex shrink-0 items-center gap-[4px]"><FilePlus2 size={11} color="#3b78d0" />New Order</button>
      <Sep cls="mx-[3px]" />
      <Tool label="Bar chart"><Glyph c="#1fb866" d="M3.500 3V12M1 10H3.500M3.500 5H6M9.500 1V9M7.500 3H9.500M9.500 7.500H12" /></Tool>
      <Tool label="Candlesticks" w="w-[20px]" active><CandleGlyph cls="h-[13px] w-[11px]" /></Tool>
      <Tool label="Line chart" w="w-[23px]"><Glyph c="#1fb866" d="M.5 8L3.500 4.500L6 9.500L8.500 3.500L10 7L12.500 4.500" /></Tool>
      <Sep cls="mx-[1px]" />
      <Tool label="Zoom in"><ZoomIn size={13} color="#3b78d0" /></Tool>
      <Tool label="Zoom out" w="w-[22px]"><ZoomOut size={13} color="#3b78d0" /></Tool>
      <Tool label="Tile windows" w="w-[22px]"><Grid2x2 size={13} color="#3b78d0" /></Tool>
      <Sep cls="mx-[1px]" />
      <Tool label="Auto scroll" w="w-[20px]" active><Glyph c="#2ad080" d="M1.500 2V9M4.500 2V9M.5 3.500H2.500V7.500H.5M3.500 3.500H5.500V7.500H3.500ZM7 5.500H12M10 3.500L12 5.500L10 7.500"><path d="M1 11.500H12" stroke="#a0c8e8" /></Glyph></Tool>
      <span className="w-[2px]" />
      <Tool label="Chart shift" w="w-[20px]" active><Glyph c="#2ad080" d="M1.500 2V9M4.500 2V9M.5 3.500H2.500V7.500H.5M3.500 3.500H5.500V7.500H3.500Z"><path d="M1 11.500H12M8 2V9M12.500 5.500H9.500" stroke="#60a8f0" /></Glyph></Tool>
      <Sep cls="mx-[2px]" />
      <Tool label="Screenshot"><span className="flex border border-dashed border-[#2f5c98] pl-[2px] pt-[2px]"><Camera size={9} color="#3b78d0" strokeWidth={2.5} /></span></Tool>
      <DotSep />
      <div className="ml-[2px] grid w-[193px] shrink-0 grid-cols-9">
        {["M1", "M5", "M15", "M30", "H1", "H4", "D1", "W1", "MN"].map((t) => (
          <button key={t} type="button" className={`h-[19px] text-[8px] ${t === "H1" ? "border border-[#6aa8d0] bg-[#0a64a0] text-[#58a8f0]" : "text-[#3b78d0]"}`}>
            {t}
          </button>
        ))}
      </div>
      <DotSep />
      <span className="w-[2px]" />
      <Tool label="Cursor" w="w-[20px]" active><MousePointer2 size={12} color="#4aa0f0" fill="#12304c" /></Tool>
      <Tool label="Crosshair" w="w-[23px]"><Glyph d="M6.500 1V5.500M6.500 7.500V12M1 6.500H5.500M7.500 6.500H12" /></Tool>
      <Sep cls="mx-[1px]" />
      <div className="grid w-[128px] shrink-0 grid-cols-6 justify-items-center">
        <Tool label="Vertical line"><Glyph d="M6.500 1V5M6.500 8V12"><circle cx="6.500" cy="6.500" r="1.400" /></Glyph></Tool>
        <Tool label="Horizontal line"><Glyph d="M1 6.500H5M8 6.500H12"><circle cx="6.500" cy="6.500" r="1.400" /></Glyph></Tool>
        <Tool label="Trend line"><Glyph d="M3 10L10 3"><circle cx="2" cy="11" r="1.300" /><circle cx="11" cy="2" r="1.300" /></Glyph></Tool>
        <Tool label="Channel"><Glyph d="M1 8L9 1M4 12L12 5"><circle cx="5" cy="4.500" r="1.200" /><circle cx="8" cy="8.500" r="1.200" /></Glyph></Tool>
        <Tool label="Fibonacci"><Glyph d="M3 2H12M1 5H12M1 8H12M1 11H10"><circle cx="2" cy="2" r="1" /><circle cx="11" cy="11" r="1" /></Glyph></Tool>
        <Tool label="Text"><Glyph d="M2.500 4V2H10.500V4M6.500 2V11.500" /></Tool>
      </div>
      <Tool label="Objects" w="w-[27px]"><Glyph><path d="M3.500 1L6 5H1Z" /><circle cx="9.500" cy="3" r="2" /><circle cx="3.500" cy="9.500" r="2" /><circle cx="9.500" cy="9.500" r="2" /></Glyph><Caret /></Tool>
      <div className="ml-auto flex items-center pr-[3px]">
        <Tool label="Search" w="w-[24px]"><Search size={10} color="#c4c4c4" /></Tool>
        <Tool label="Account" w="w-[23px]"><CircleUser size={11} color="#c4c4c4" /></Tool>
        <Tool label="Level"><Glyph c="#1fb866"><circle cx="6.500" cy="3" r="2" /><path d="M6.500 5V8M2.500 8V12H4M5.500 9L6.500 12L7.500 9M9 8V12H11" /></Glyph></Tool>
        <span className="flex h-[10px] w-[29px] border border-[#666]"><span className="w-[10px] bg-[#1fa040]" /></span>
      </div>
    </nav>
  );
}

const dates = [
  "31 Dec 2025", "1 Jan 13:00", "2 Jan 21:00", "4 Jan 05:00", "5 Jan 13:00", "6 Jan 21:00", "8 Jan 05:00", "9 Jan 13:00", "10 Jan 21:45",
  "12 Jan 05:00", "13 Jan 13:00", "14 Jan 21:00", "16 Jan 05:00", "17 Jan 13:45", "18 Jan 21:00", "20 Jan 05:00", "21 Jan 13:00",
  "22 Jan 21:00", "24 Jan 05:45", "25 Jan 13:00", "26 Jan 21:00", "28 Jan 05:00", "29 Jan 13:00", "30 Jan 21:00", "1 Feb 17:00", "3 Feb 01:00",
];

function Ruler() {
  return (
    <div className="flex h-[45px] shrink-0 flex-col bg-black pl-[3px]">
      <div className="mt-[1px] flex h-[29px] flex-col border-b border-l border-[#e8e8e8]">
        <div className="flex h-[27px] border-y border-dashed border-[#8a8a8a]">
          {Array.from({ length: 52 }, (_, i) => (
            <span key={i} className={i ? "flex-1 border-l border-dashed border-[#777]" : "flex-1"} />
          ))}
        </div>
      </div>
      <div className="flex">
        {dates.map((d) => (
          <span key={d} className="w-0 flex-1 whitespace-nowrap text-[7px] font-semibold leading-[14px] text-white">
            {d}
          </span>
        ))}
      </div>
    </div>
  );
}

export default function App() {
  return (
    <main className="flex min-h-screen flex-col overflow-hidden bg-[#2d2d2d] font-['Noto_Sans',sans-serif]">
      <Toolbar />
      <div className="flex border-y border-[#8c8c8c]">
        <BtcWindow />
        <XauWindow />
      </div>
      <div className="flex h-[15px] shrink-0 items-start border-b border-[#777] pl-[3px] font-['Lato','Noto_Sans',sans-serif] text-[8px] leading-[13px]">
        <button type="button" className="h-[13px] w-[55px] border border-t-0 border-[#888] text-[#a0a0a0]">BTCUSD,H1</button>
        <button type="button" className="h-[13px] px-[8px] text-[#e4e4e4]">XAUUSD,H1</button>
        <span className="ml-auto flex gap-[4px] pr-[6px] pt-[3px] text-[#707070]">
          <ChevronDown size={8} className="rotate-90" />
          <ChevronDown size={8} className="-rotate-90" />
        </span>
      </div>
      <footer className="flex h-[14px] shrink-0 items-center font-['Lato','Noto_Sans',sans-serif] text-[8px] text-[#b4b4b4]">
        <span className="flex-1 pl-[1px]">For Help, press F1</span>
        <span className="h-full w-[85px] border-l border-[#555] pl-[2px] leading-[14px]">Default</span>
        <span className="h-full w-[64px] border-l border-[#555]" />
        <span className="h-full w-[48px] border-l border-[#555]" />
        <span className="h-full w-[48px] border-l border-[#555]" />
        <span className="h-full w-[46px] border-l border-[#555]" />
        <span className="h-full w-[46px] border-l border-[#555]" />
        <span className="h-full w-[44px] border-l border-[#555]" />
        <span className="flex h-full w-[80px] items-center gap-[4px] border-l border-[#555] pl-[3px]">
          <svg className="h-[8px] w-[9px]" viewBox="0 0 9 8" fill="#1fa878"><path d="M0 6h1.500v2H0zM2.500 4H4v4H2.500zM5 2h1.500v6H5zM7.500 0H9v8H7.500z" /></svg>
          329 / 0 Mb
        </span>
      </footer>
      <Ruler />
      <div className="flex flex-1 border-t border-[#666] bg-white pt-[1px]">
        <span className="w-[521px] border-r border-t border-[#aaa] bg-[#ececec]" />
        <span className="w-[63px]" />
        <span className="flex-1 border-l border-t border-[#aaa] bg-[#ececec]" />
      </div>
    </main>
  );
}
